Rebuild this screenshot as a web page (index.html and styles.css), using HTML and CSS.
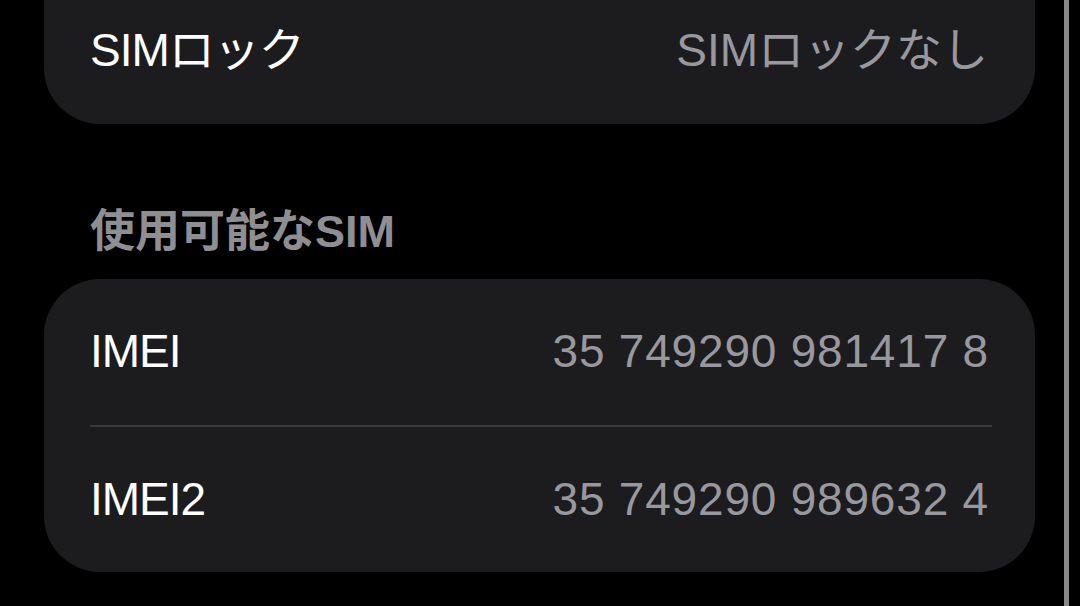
FILE: index.html
```html
<!DOCTYPE html>
<html lang="ja">
<head>
    <meta charset="UTF-8">
    <meta name="viewport" content="width=device-width, initial-scale=1.0">
    <title>情報</title>
    <link rel="stylesheet" href="styles.css">
</head>
<body>

    <div class="page">
        <div class="screen">
            <div class="card card-top">
                <div class="row">
                    <span class="label">SIMロック</span>
                    <span class="value">SIMロックなし</span>
                </div>
            </div>

            <h2 class="section-title">使用可能なSIM</h2>

            <div class="card">
                <div class="row">
                    <span class="label">IMEI</span>
                    <span class="value num">35 749290 981417 8</span>
                </div>
                <div class="sep"></div>
                <div class="row">
                    <span class="label">IMEI2</span>
                    <span class="value num">35 749290 989632 4</span>
                </div>
            </div>
        </div>
        <div class="rail"></div>
    </div>

</body>
</html>
```

FILE: styles.css
```css
html, body {
    margin: 0;
    padding: 0;
    background-color: #000;
    height: 100%;
    overflow: hidden;
}
body {
    font-family: 'Liberation Sans', Arial, 'Noto Sans CJK JP', sans-serif;
    color: #fff;
}
.page {
    display: flex;
    height: 606px;
}
.screen {
    flex: 1;
    padding: 0 29px 0 44px;
}
.rail {
    width: 5px;
    margin-right: 11px;
    background-color: #8a8a8a;
}
.card {
    background-color: #1c1c1e;
    border-radius: 56px;
}
.card-top {
    margin-top: -22px;
    border-top-left-radius: 0;
    border-top-right-radius: 0;
}
.row {
    height: 146px;
    padding: 0 47px 0 46px;
    display: flex;
    align-items: center;
    justify-content: space-between;
    font-size: 46px;
    line-height: 1.2;
}
.row + .sep + .row {
    height: 145px;
}
.label {
    color: #fff;
    letter-spacing: -1px;
}
.value {
    color: #98989e;
}
.value.num {
    letter-spacing: 0.8px;
    margin-right: -1px;
}
.sep {
    height: 2px;
    margin: 0 43px 0 46px;
    background-color: #3a3a3d;
}
.section-title {
    margin: 0;
    padding: 83px 0 22px 46px;
    font-size: 45px;
    line-height: 50px;
    font-weight: 600;
    color: #8e8e93;
}
```
